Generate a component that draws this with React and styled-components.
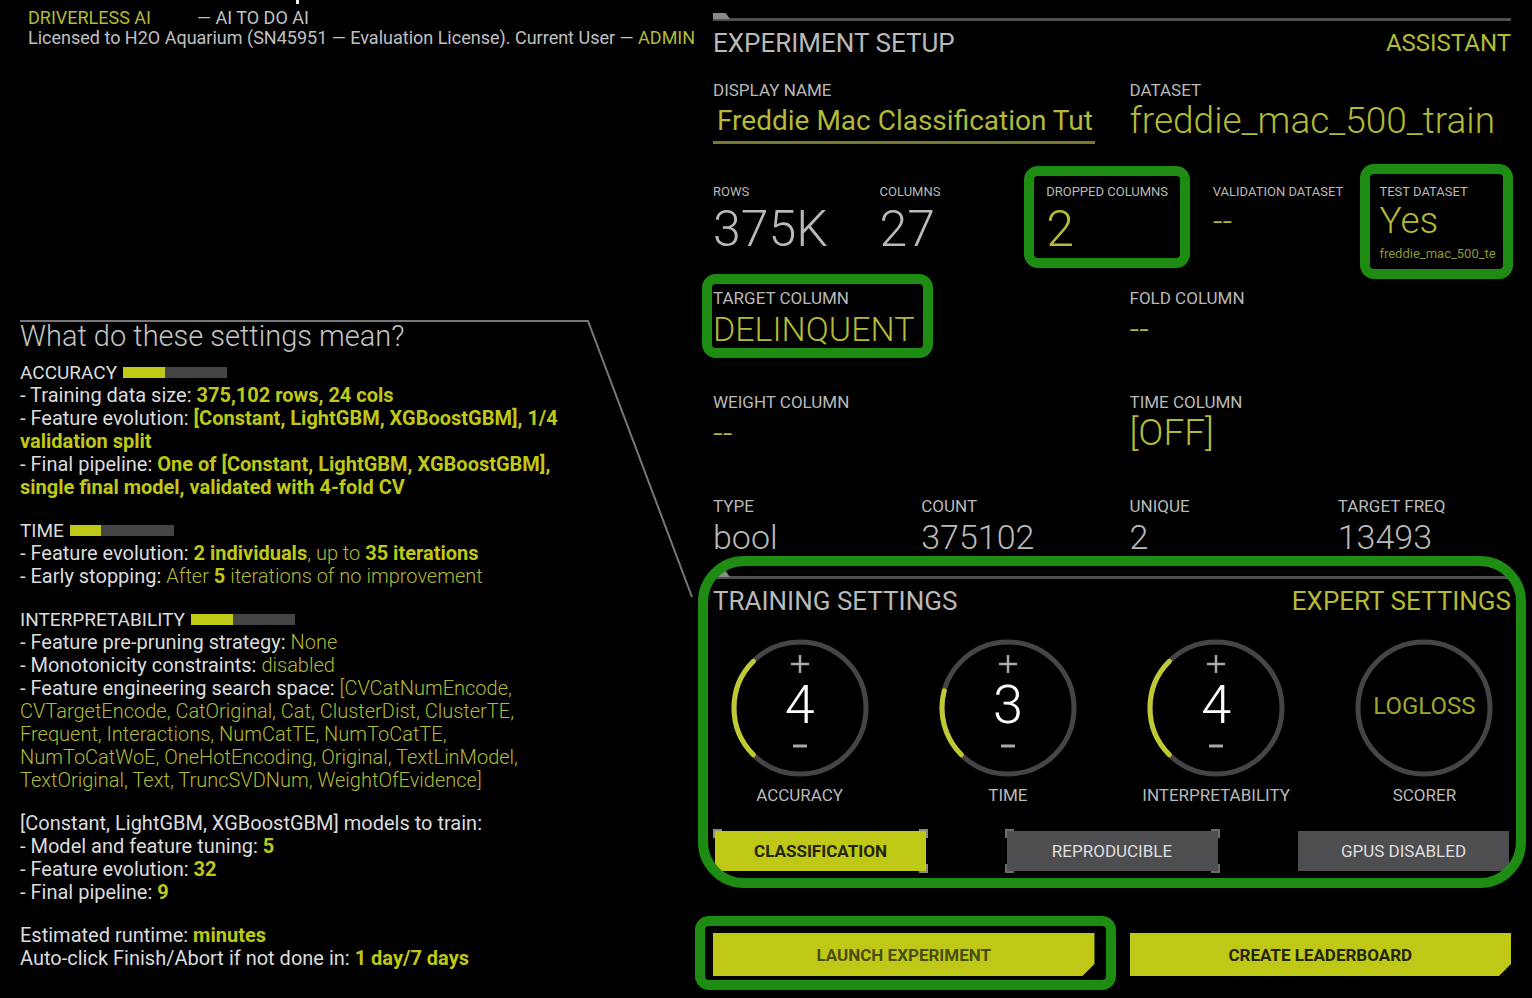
import React from "react";
import styled, { createGlobalStyle, css } from "styled-components";

const lime = "#bfc816";
const limeText = "#b3ba35";
const grayText = "#b9b9b9";

const GlobalStyle = createGlobalStyle`
  *, *::before, *::after { box-sizing: border-box; }
  body { margin: 0; background: #000; color: ${grayText}; font-family: "Roboto", "Liberation Sans", sans-serif; }
  button, input { font: inherit; color: inherit; background: none; border: 0; padding: 0; margin: 0; border-radius: 0; }
  button { cursor: pointer; }
  a { color: inherit; text-decoration: none; }
  h1, h2, p { margin: 0; font-size: inherit; font-weight: inherit; }
`;

const Page = styled.div`
  display: grid;
  grid-template-columns: minmax(0, 713fr) minmax(0, 819fr);
  min-height: 100vh;
  overflow: hidden;
`;

const LeftColumn = styled.div`
  display: flex;
  flex-direction: column;
`;

const CutMark = styled.div`
  width: 3px;
  height: 4px;
  margin-left: 296px;
  background: #eee;
`;

const Masthead = styled.header`
  margin: 4px 0 0 28px;
  font-size: 18px;
  line-height: 20px;
  white-space: nowrap;
  color: #c0c0c0;
`;

const Brand = styled.div`
  display: flex;
  gap: 46px;
`;

const Accent = styled.span`
  color: ${limeText};
  font-weight: ${(p) => (p.$light ? 300 : 400)};
`;

const Strong = styled.strong`
  color: ${lime};
  font-weight: 700;
`;

const Explain = styled.section`
  position: relative;
  margin: 272px 0 0 20px;
  font-size: 20px;
  line-height: 23px;
  white-space: nowrap;
  color: #dcdcdc;
`;

const CalloutLine = styled.svg`
  position: absolute;
  top: 0;
  left: 0;
  overflow: visible;
  pointer-events: none;
`;

const ExplainTitle = styled.h2`
  font-size: 29px;
  line-height: 32px;
  padding-bottom: 9px;
  font-weight: 300;
  color: #c4c4c4;
`;

const Block = styled.div`
  margin-bottom: 20px;
`;

const MeterTitle = styled.div`
  display: flex;
  align-items: center;
  gap: 6px;
  font-size: 19px;
`;

const Meter = styled.span`
  width: 104px;
  height: 11px;
  background: #444;
`;

const MeterFill = styled.span`
  display: block;
  height: 100%;
  background: ${lime};
`;

const RightColumn = styled.main`
  display: flex;
  flex-direction: column;
  padding: 13px 21px 22px 0;
`;

const SectionRule = styled.div`
  height: 8px;
  border-bottom: 3px solid #505052;
  &::before {
    content: "";
    display: block;
    width: 17px;
    height: 6px;
    background: #8a8a8c;
    clip-path: polygon(0 0, 75% 0, 100% 100%, 0 100%);
  }
`;

const SectionHead = styled.div`
  display: flex;
  justify-content: space-between;
  font-size: 26px;
  line-height: 44px;
  margin-bottom: ${(p) => p.$gap}px;
`;

const HeadLink = styled.a`
  font-size: ${(p) => (p.$compact ? 24 : 26)}px;
  color: ${limeText};
`;

const Highlight = styled.div`
  position: absolute;
  inset: ${(p) => p.$inset};
  border: 10px solid #1e8c12;
  border-radius: ${(p) => p.$radius || 14}px;
  pointer-events: none;
`;

const FieldRow = styled.div`
  display: grid;
  grid-template-columns: repeat(${(p) => p.$cols}, minmax(0, 1fr));
  column-gap: 35px;
  height: ${(p) => p.$height || 104}px;
`;

const Field = styled.div`
  position: relative;
  display: flex;
  flex-direction: column;
  align-items: flex-start;
  white-space: nowrap;
`;

const FieldLabel = styled.label`
  font-size: ${(p) => (p.$small ? 13 : 17)}px;
  line-height: ${(p) => (p.$small ? 16 : 20)}px;
`;

const valueSizes = { large: 50, medium: 34, title: 37 };

const valueText = css`
  font-size: ${(p) => valueSizes[p.$size || "medium"]}px;
  line-height: ${(p) => (p.$size === "large" ? 58 : 42)}px;
  font-weight: 300;
`;

const Value = styled.span`
  ${valueText}
`;

const ValueButton = styled.button`
  ${valueText}
  color: ${limeText};
`;

const FileName = styled.span`
  width: 100%;
  overflow: hidden;
  font-size: 13px;
  line-height: 24px;
  color: #8f962a;
`;

const NameInput = styled.input`
  width: 100%;
  height: 44px;
  padding-left: 4px;
  border-bottom: 3px solid #777a33;
  font-size: 28px;
  color: ${limeText};
  outline: 0;
`;

const Training = styled.section`
  position: relative;
`;

const Dials = styled.div`
  display: grid;
  grid-template-columns: repeat(4, minmax(0, 1fr));
  column-gap: 35px;
`;

const DialCell = styled.div`
  display: flex;
  flex-direction: column;
  align-items: center;
  gap: 9px;
`;

const DialFace = styled.div`
  display: grid;
  width: 136px;
  height: 136px;
  > * { grid-area: 1 / 1; }
`;

const DialStack = styled.div`
  display: flex;
  flex-direction: column;
  align-items: center;
  justify-content: center;
  padding-bottom: 6px;
`;

const StepButton = styled.button`
  display: flex;
  align-items: center;
  justify-content: center;
  width: 30px;
  height: 24px;
`;

const DialValue = styled.output`
  font-size: 54px;
  line-height: 58px;
  font-weight: 300;
  color: #fff;
`;

const ScorerButton = styled.button`
  padding-bottom: 4px;
  font-size: 24px;
  color: #9fa62c;
`;

const DialLabel = styled.span`
  font-size: 17px;
  line-height: 20px;
`;

const Toggles = styled.div`
  display: flex;
  justify-content: space-between;
  margin-top: 24px;
`;

const corner = (c) => `linear-gradient(${c}, ${c})`;

const ToggleFrame = styled.div`
  padding: 2px;
  ${(p) =>
    p.$corner &&
    css`
      background:
        ${corner(p.$corner)} 0 0 / 9px 9px no-repeat,
        ${corner(p.$corner)} 100% 0 / 9px 9px no-repeat,
        ${corner(p.$corner)} 0 100% / 9px 9px no-repeat,
        ${corner(p.$corner)} 100% 100% / 9px 9px no-repeat;
    `}
`;

const Toggle = styled.button`
  display: block;
  width: 211px;
  height: 40px;
  font-size: 17px;
  font-weight: ${(p) => (p.$on ? 700 : 400)};
  background: ${(p) => (p.$on ? lime : "#4e4e50")};
  color: ${(p) => (p.$on ? "#23260a" : "#dedede")};
`;

const Actions = styled.div`
  display: grid;
  grid-template-columns: repeat(2, minmax(0, 1fr));
  column-gap: 35px;
  margin-top: 60px;
`;

const ActionCell = styled.div`
  position: relative;
`;

const ActionButton = styled.button`
  display: block;
  width: 100%;
  height: 43px;
  font-size: 17px;
  font-weight: 700;
  background: ${lime};
  color: ${(p) => (p.$soft ? "#4a4e10" : "#23260a")};
  clip-path: polygon(0 0, 100% 0, 100% 31px, calc(100% - 12px) 100%, 0 100%);
`;

function point(deg) {
  const a = (deg * Math.PI) / 180;
  return `${68 + 66 * Math.cos(a)} ${68 + 66 * Math.sin(a)}`;
}

function Ring({ level }) {
  const end = 135 + ((level - 1) / 9) * 270;
  return (
    <svg width="136" height="136" viewBox="0 0 136 136" fill="none" overflow="visible" aria-hidden="true">
      <circle cx="68" cy="68" r="66" stroke="#464446" strokeWidth="5" />
      {level && (
        <path
          d={`M${point(135)}A66 66 0 0 1 ${point(end)}`}
          stroke="#c0c834"
          strokeWidth="5"
          strokeLinecap="round"
        />
      )}
    </svg>
  );
}

function Dial({ label, value }) {
  return (
    <DialCell>
      <DialFace>
        <Ring level={value} />
        <DialStack>
          <StepButton aria-label={`Increase ${label}`}>
            <svg width="18" height="18" viewBox="0 0 18 18" stroke="#a8a8a8" strokeWidth="2.5">
              <path d="M0 9h18M9 0v18" />
            </svg>
          </StepButton>
          <DialValue>{value}</DialValue>
          <StepButton aria-label={`Decrease ${label}`}>
            <svg width="14" height="4" viewBox="0 0 14 4" stroke="#a8a8a8" strokeWidth="3">
              <path d="M0 2h14" />
            </svg>
          </StepButton>
        </DialStack>
      </DialFace>
      <DialLabel>{label}</DialLabel>
    </DialCell>
  );
}

function MeterLine({ name, level }) {
  return (
    <MeterTitle>
      {name}
      <Meter>
        <MeterFill style={{ width: `${level * 10}%` }} />
      </Meter>
    </MeterTitle>
  );
}

function Explanation() {
  return (
    <Explain>
      <CalloutLine width="673" height="278" viewBox="0 0 673 278" fill="none" aria-hidden="true">
        <path d="M0 1H568L672 277" stroke="#77777a" strokeWidth="2" />
      </CalloutLine>
      <ExplainTitle>What do these settings mean?</ExplainTitle>
      <Block>
        <MeterLine name="ACCURACY" level={4} />
        <p>- Training data size: <Strong>375,102 rows, 24 cols</Strong></p>
        <p>
          - Feature evolution: <Strong>[Constant, LightGBM, XGBoostGBM], 1/4<br />validation split</Strong>
        </p>
        <p>
          - Final pipeline: <Strong>One of [Constant, LightGBM, XGBoostGBM],<br />single final model, validated with 4-fold CV</Strong>
        </p>
      </Block>
      <Block>
        <MeterLine name="TIME" level={3} />
        <p>
          - Feature evolution: <Strong>2 individuals</Strong><Accent $light>, up to </Accent><Strong>35 iterations</Strong>
        </p>
        <p>
          - Early stopping: <Accent $light>After </Accent><Strong>5</Strong><Accent $light> iterations of no improvement</Accent>
        </p>
      </Block>
      <Block>
        <MeterLine name="INTERPRETABILITY" level={4} />
        <p>- Feature pre-pruning strategy: <Accent $light>None</Accent></p>
        <p>- Monotonicity constraints: <Accent $light>disabled</Accent></p>
        <p>
          - Feature engineering search space: <Accent $light>[CVCatNumEncode,<br />
          CVTargetEncode, CatOriginal, Cat, ClusterDist, ClusterTE,<br />
          Frequent, Interactions, NumCatTE, NumToCatTE,<br />
          NumToCatWoE, OneHotEncoding, Original, TextLinModel,<br />
          TextOriginal, Text, TruncSVDNum, WeightOfEvidence]</Accent>
        </p>
      </Block>
      <Block>
        <p>[Constant, LightGBM, XGBoostGBM] models to train:</p>
        <p>- Model and feature tuning: <Strong>5</Strong></p>
        <p>- Feature evolution: <Strong>32</Strong></p>
        <p>- Final pipeline: <Strong>9</Strong></p>
      </Block>
      <p>Estimated runtime: <Strong>minutes</Strong></p>
      <p>Auto-click Finish/Abort if not done in: <Strong>1 day/7 days</Strong></p>
    </Explain>
  );
}

function StaticField({ label, value, small, size }) {
  return (
    <Field>
      <FieldLabel as="span" $small={small}>{label}</FieldLabel>
      <Value $size={size}>{value}</Value>
    </Field>
  );
}

function PickField({ id, label, value, small, size, note, highlight }) {
  return (
    <Field>
      <FieldLabel htmlFor={id} $small={small}>{label}</FieldLabel>
      <ValueButton id={id} $size={size}>{value}</ValueButton>
      {note && <FileName>{note}</FileName>}
      {highlight && <Highlight $inset={highlight} />}
    </Field>
  );
}

export default function App() {
  return (
    <>
      <GlobalStyle />
      <Page>
        <LeftColumn>
          <CutMark />
          <Masthead>
            <Brand>
              <Accent>DRIVERLESS AI</Accent>
              <span>— AI TO DO AI</span>
            </Brand>
            <div>
              Licensed to H2O Aquarium (SN45951 — Evaluation License). Current User — <Accent>ADMIN</Accent>
            </div>
          </Masthead>
          <Explanation />
        </LeftColumn>
        <RightColumn>
          <SectionRule />
          <SectionHead $gap={15}>
            <h1>EXPERIMENT SETUP</h1>
            <HeadLink href="#assistant" $compact>ASSISTANT</HeadLink>
          </SectionHead>
          <FieldRow $cols={2}>
            <Field>
              <FieldLabel htmlFor="display-name">DISPLAY NAME</FieldLabel>
              <NameInput id="display-name" defaultValue="Freddie Mac Classification Tut" />
            </Field>
            <PickField id="dataset" label="DATASET" value="freddie_mac_500_train" size="title" />
          </FieldRow>
          <FieldRow $cols={5}>
            <StaticField label="ROWS" value="375K" small size="large" />
            <StaticField label="COLUMNS" value="27" small size="large" />
            <PickField
              id="dropped"
              label="DROPPED COLUMNS"
              value="2"
              small
              size="large"
              highlight="-18px -12px 20px -22px"
            />
            <PickField id="validation" label="VALIDATION DATASET" value="--" small />
            <PickField
              id="test"
              label="TEST DATASET"
              value="Yes"
              small
              size="title"
              note="freddie_mac_500_te"
              highlight="-20px -2px 9px -19px"
            />
          </FieldRow>
          <FieldRow $cols={2}>
            <PickField id="target" label="TARGET COLUMN" value="DELINQUENT" highlight="-14px 162px 34px -11px" />
            <PickField id="fold" label="FOLD COLUMN" value="--" />
          </FieldRow>
          <FieldRow $cols={2}>
            <PickField id="weight" label="WEIGHT COLUMN" value="--" />
            <PickField id="time-column" label="TIME COLUMN" value="[OFF]" size="title" />
          </FieldRow>
          <FieldRow $cols={4} $height={75}>
            <StaticField label="TYPE" value="bool" />
            <StaticField label="COUNT" value="375102" />
            <StaticField label="UNIQUE" value="2" />
            <StaticField label="TARGET FREQ" value="13493" />
          </FieldRow>
          <Training>
            <SectionRule />
            <SectionHead $gap={17}>
              <h2>TRAINING SETTINGS</h2>
              <HeadLink href="#expert">EXPERT SETTINGS</HeadLink>
            </SectionHead>
            <Dials>
              <Dial label="ACCURACY" value={4} />
              <Dial label="TIME" value={3} />
              <Dial label="INTERPRETABILITY" value={4} />
              <DialCell>
                <DialFace>
                  <Ring />
                  <ScorerButton>LOGLOSS</ScorerButton>
                </DialFace>
                <DialLabel>SCORER</DialLabel>
              </DialCell>
            </Dials>
            <Toggles>
              <ToggleFrame $corner="#8c8c78">
                <Toggle $on>CLASSIFICATION</Toggle>
              </ToggleFrame>
              <ToggleFrame $corner="#6c6c70">
                <Toggle>REPRODUCIBLE</Toggle>
              </ToggleFrame>
              <ToggleFrame>
                <Toggle>GPUS DISABLED</Toggle>
              </ToggleFrame>
            </Toggles>
            <Highlight $inset="-15px -15px -15px" $radius={46} />
          </Training>
          <Actions>
            <ActionCell>
              <ActionButton $soft>LAUNCH EXPERIMENT</ActionButton>
              <Highlight $inset="-17px -21px -14px -18px" />
            </ActionCell>
            <ActionCell>
              <ActionButton>CREATE LEADERBOARD</ActionButton>
            </ActionCell>
          </Actions>
        </RightColumn>
      </Page>
    </>
  );
}
